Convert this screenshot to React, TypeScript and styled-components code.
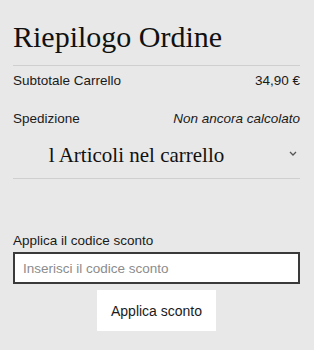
import React from "react";
import styled, { createGlobalStyle } from "styled-components";

const Global = createGlobalStyle`
  html, body { margin: 0; padding: 0; background: #e8e8e8; }
  body { font-family: "Liberation Sans", Arial, sans-serif; color: #1a1a1a; }
  * { box-sizing: border-box; }
`;

const Panel = styled.section`
  width: 314px;
  height: 350px;
  padding: 18px 14px 0 13px;
  background: #e8e8e8;
`;

const Title = styled.h1`
  margin: 0;
  font-family: "Liberation Serif", "Times New Roman", serif;
  font-weight: 400;
  font-size: 30px;
  line-height: 38px;
  color: #111;
  padding-bottom: 9px;
  border-bottom: 1px solid #cfcfcf;
`;

const Row = styled.div<{ $h: number }>`
  display: flex;
  justify-content: space-between;
  align-items: center;
  height: ${(p) => p.$h}px;
  font-size: 13.5px;
  line-height: 16px;
`;

const Value = styled.span<{ $italic?: boolean }>`
  font-style: ${(p) => (p.$italic ? "italic" : "normal")};
`;

const Toggle = styled.button`
  display: flex;
  align-items: flex-start;
  width: 100%;
  padding: 1px 0 11px;
  border: 0;
  border-bottom: 1px solid #cfcfcf;
  background: transparent;
  cursor: pointer;
`;

const ToggleText = styled.span`
  flex: 1;
  text-align: center;
  font-family: "Liberation Serif", "Times New Roman", serif;
  font-size: 21px;
  line-height: 24px;
  color: #111;
`;

const ChevronCell = styled.span`
  display: flex;
  justify-content: flex-end;
  width: 40px;
  padding: 8px 3px 0 0;
`;

const Discount = styled.form`
  display: flex;
  flex-direction: column;
  align-items: center;
  margin-top: 54px;
`;

const Label = styled.label`
  align-self: stretch;
  font-size: 13.5px;
  line-height: 16px;
  margin-bottom: 3px;
`;

const Input = styled.input`
  align-self: stretch;
  height: 32px;
  border: 2px solid #3a3a3a;
  background: #fff;
  padding: 0 8px;
  font-family: "Liberation Sans", Arial, sans-serif;
  font-size: 13.5px;
  &::placeholder { color: #8c8c8c; }
`;

const Button = styled.button`
  margin-top: 6px;
  width: 119px;
  height: 41px;
  border: 0;
  background: #fff;
  font-family: "Liberation Sans", Arial, sans-serif;
  font-size: 14px;
  color: #1a1a1a;
  cursor: pointer;
`;

export default function App() {
  return (
    <>
      <Global />
      <Panel>
        <Title>Riepilogo Ordine</Title>
        <Row $h={30}>
          <span>Subtotale Carrello</span>
          <Value>34,90 €</Value>
        </Row>
        <Row $h={46}>
          <span>Spedizione</span>
          <Value $italic>Non ancora calcolato</Value>
        </Row>
        <Toggle type="button">
          <ToggleText>l Articoli nel carrello</ToggleText>
          <ChevronCell>
            <svg width="8" height="5" viewBox="0 0 8 5" fill="none">
              <path d="M1 1l3 3 3-3" stroke="#555" strokeWidth="1.3" />
            </svg>
          </ChevronCell>
        </Toggle>
        <Discount onSubmit={(e) => e.preventDefault()}>
          <Label htmlFor="code">Applica il codice sconto</Label>
          <Input id="code" placeholder="Inserisci il codice sconto" />
          <Button type="submit">Applica sconto</Button>
        </Discount>
      </Panel>
    </>
  );
}
